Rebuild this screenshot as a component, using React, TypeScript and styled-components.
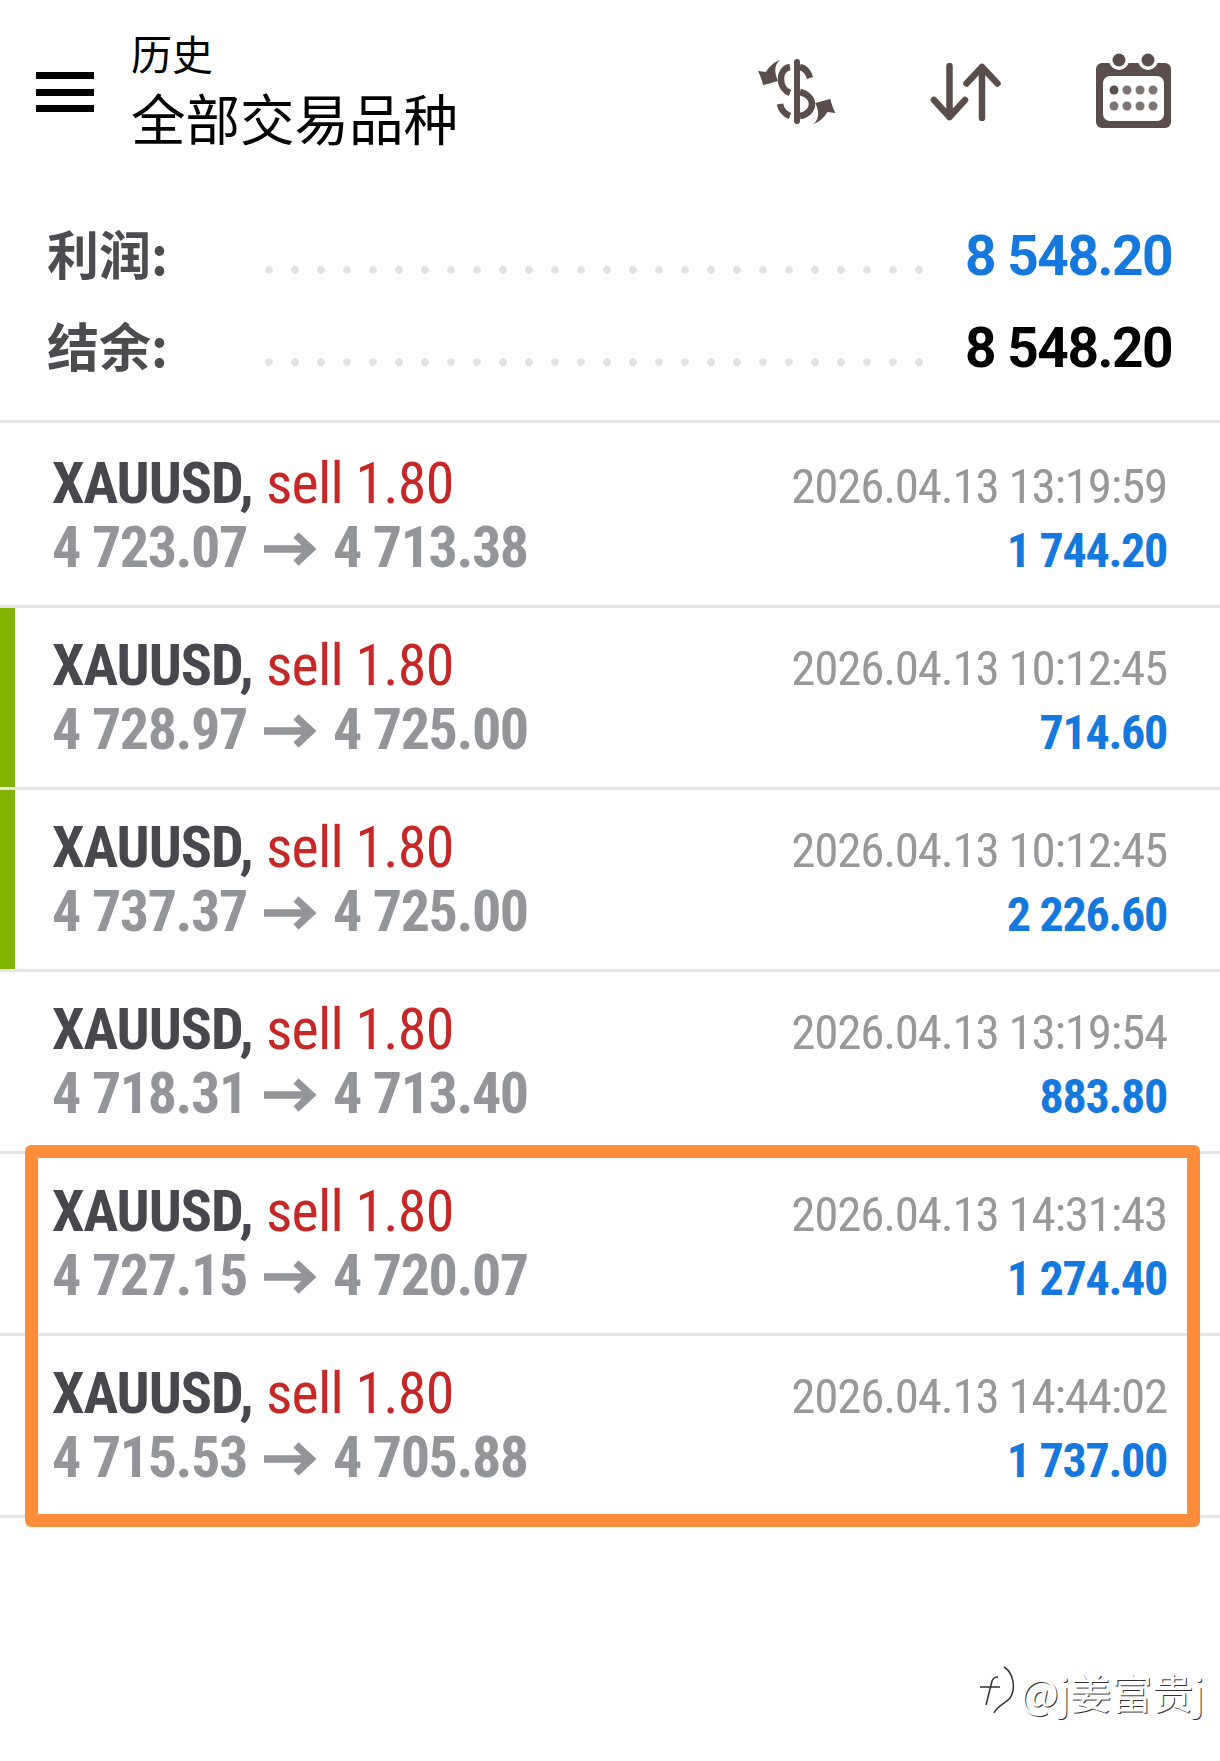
import styled, { createGlobalStyle } from "styled-components"

const rows = [
    { open: "4 723.07", close: "4 713.38", time: "2026.04.13 13:19:59", profit: "1 744.20" },
    { open: "4 728.97", close: "4 725.00", time: "2026.04.13 10:12:45", profit: "714.60", flag: true },
    { open: "4 737.37", close: "4 725.00", time: "2026.04.13 10:12:45", profit: "2 226.60", flag: true },
    { open: "4 718.31", close: "4 713.40", time: "2026.04.13 13:19:54", profit: "883.80" },
    { open: "4 727.15", close: "4 720.07", time: "2026.04.13 14:31:43", profit: "1 274.40" },
    { open: "4 715.53", close: "4 705.88", time: "2026.04.13 14:44:02", profit: "1 737.00" },
]

const swirl = "M22 1C15 7 17 15 20 22C14 24 9 25 5 26C4 21 2 16 0 12L8 13C12 6 17 3 22 1Z"

function DollarIcon() {
    return (
        <HeaderIcon viewBox="0 0 78 66" width="78" height="66" $drop={3}>
            <rect x="36" y="0" width="6" height="65" rx="3" />
            <g fill="none" stroke="#5a4e4c" strokeWidth="6.5">
                <path d="M32 8C26 9 23 14 23 20C23 27 27 32 32 34" />
                <path d="M42 8C47 9 50 12 52 19" />
                <path d="M42 33C50 35 54 40 54 45C54 51 49 56 42 57" />
                <path d="M22 45C23 51 27 55 32 57" />
            </g>
            <path d={swirl} />
            <path d={swirl} transform="rotate(180 38.7 33)" />
        </HeaderIcon>
    )
}

function SortIcon() {
    return (
        <HeaderIcon viewBox="0 0 72 58" width="72" height="58" $drop={4}>
            <g fill="none" stroke="#5a4e4c" strokeWidth="6.5" strokeLinecap="round" strokeLinejoin="round">
                <path d="M19.500 3V54M4 37L19.500 54L35 37" />
                <path d="M52 55V4M36.500 20.500L52 4L67.500 20.500" />
            </g>
        </HeaderIcon>
    )
}

function CalendarIcon() {
    const dots = [18, 31, 44, 57]
    return (
        <HeaderIcon viewBox="0 0 75 75" width="75" height="75" $drop={1}>
            <rect x="0" y="10" width="75" height="65" rx="6" />
            <rect x="7" y="23" width="61" height="45" rx="7" fill="#fff" />
            <circle cx="23" cy="7" r="10" fill="#fff" />
            <circle cx="52" cy="7" r="10" fill="#fff" />
            <circle cx="23" cy="7" r="6.500" />
            <circle cx="52" cy="7" r="6.500" />
            {dots.map(x => <circle key={x} cx={x} cy="37" r="4.500" fill={x === 18 ? "#5a4e4c" : "#7d7573"} />)}
            {dots.map(x => <circle key={x} cx={x} cy="53" r="4.500" fill="#7d7573" />)}
        </HeaderIcon>
    )
}

function PriceArrow() {
    return (
        <ArrowSvg viewBox="0 0 52 34" width="52" height="34">
            <path d="M0 17H47M32 3L47 17L32 31" fill="none" stroke="#939598" strokeWidth="7.5" />
        </ArrowSvg>
    )
}

export default function App() {
    return (
        <>
            <GlobalStyle />
            <Page>
                <Header>
                    <Burger>
                        <span />
                        <span />
                        <span />
                    </Burger>
                    <TitleBlock>
                        <Subtitle>历史</Subtitle>
                        <Title>全部交易品种</Title>
                    </TitleBlock>
                    <IconBar>
                        <DollarIcon />
                        <SortIcon />
                        <CalendarIcon />
                    </IconBar>
                </Header>
                <Summary>
                    <SummaryRow>
                        <SummaryLabel>利润:</SummaryLabel>
                        <Dots />
                        <SummaryValue $blue>8 548.20</SummaryValue>
                    </SummaryRow>
                    <SummaryRow>
                        <SummaryLabel>结余:</SummaryLabel>
                        <Dots />
                        <SummaryValue>8 548.20</SummaryValue>
                    </SummaryRow>
                </Summary>
                <List>
                    {rows.map((row, i) => (
                        <Row key={i} $flag={row.flag}>
                            <Side>
                                <Line>
                                    <Symbol>XAUUSD,</Symbol> <Sell>sell 1.80</Sell>
                                </Line>
                                <Prices>
                                    {row.open}
                                    <PriceArrow />
                                    {row.close}
                                </Prices>
                            </Side>
                            <Side $right>
                                <Time>{row.time}</Time>
                                <Profit>{row.profit}</Profit>
                            </Side>
                        </Row>
                    ))}
                    <Highlight />
                </List>
                <Watermark>
                    <svg viewBox="0 0 44 52" width="44" height="52" fill="none" stroke="#333" strokeWidth="1.500">
                        <path d="M10 40L16 16C17 13 19 12 22 12M4 22H24" />
                        <path d="M28 2C38 8 40 24 34 33C30 38 22 40 18 48" />
                    </svg>
                    @j姜富贵j
                </Watermark>
            </Page>
        </>
    )
}

const GlobalStyle = createGlobalStyle`
    html, body {
        margin: 0;
        padding: 0;
        background: #fff;
    }
`

const Page = styled.div`
    position: relative;
    width: 1220px;
    height: 1761px;
    overflow: hidden;
    background: #fff;
    font-family: "Noto Sans CJK SC", Roboto, sans-serif;
`

const Header = styled.header`
    display: flex;
    align-items: center;
    height: 180px;
    padding: 0 49px 0 36px;
    box-sizing: border-box;
`

const Burger = styled.div`
    display: flex;
    flex-direction: column;
    justify-content: space-between;
    width: 58px;
    height: 40px;
    margin-top: 4px;

    & > span {
        height: 7px;
        background: #000;
    }
`

const TitleBlock = styled.div`
    display: flex;
    flex-direction: column;
    margin: 0 0 7px 37px;
    color: #000;
`

const Subtitle = styled.div`
    font-size: 41px;
    line-height: 60px;
`

const Title = styled.div`
    font-size: 54.500px;
    line-height: 70px;
`

const IconBar = styled.div`
    display: flex;
    align-items: center;
    gap: 94px;
    margin-left: auto;
`

const HeaderIcon = styled.svg<{ $drop: number }>`
    fill: #5a4e4c;
    display: block;
    margin-top: ${p => p.$drop}px;
`

const Summary = styled.section`
    display: flex;
    flex-direction: column;
    padding: 30px 48px 0 47px;
    height: 240px;
    box-sizing: border-box;
`

const SummaryRow = styled.div`
    display: flex;
    align-items: center;
    height: 92px;
`

const SummaryLabel = styled.div`
    width: 218px;
    margin-bottom: 8px;
    font-size: 52px;
    font-weight: 700;
    color: #4b4b50;
`

const Dots = styled.div`
    width: 660px;
    height: 8px;
    margin-top: 28px;
    background-image: radial-gradient(circle at 4px 4px, #e3e3e5 3.6px, transparent 4.2px);
    background-size: 26px 8px;
`

const SummaryValue = styled.div<{ $blue?: boolean }>`
    margin-left: auto;
    font-family: Roboto, sans-serif;
    font-size: 55px;
    font-weight: 700;
    letter-spacing: -1.500px;
    color: ${p => (p.$blue ? "#1478dc" : "#000")};
`

const List = styled.div`
    position: relative;
    padding-top: 3px;
    border-top: 3px solid #e5e5e5;
`

const Row = styled.div<{ $flag?: boolean }>`
    display: flex;
    justify-content: space-between;
    height: 182px;
    box-sizing: border-box;
    padding: 25px 53px 0 52px;
    border-bottom: 3px solid #e5e5e5;
    box-shadow: ${p => (p.$flag ? "inset 15px 0 0 #82b300" : "none")};
    font-family: "Roboto Condensed", Roboto, sans-serif;
    font-stretch: condensed;
`

const Side = styled.div<{ $right?: boolean }>`
    display: flex;
    flex-direction: column;
    align-items: ${p => (p.$right ? "flex-end" : "flex-start")};
    margin-top: ${p => (p.$right ? 4 : 0)}px;
`

const Line = styled.div`
    font-size: 58px;
    line-height: 64px;
    white-space: pre;
`

const Symbol = styled.span`
    font-weight: 700;
    letter-spacing: -1px;
    color: #47474d;
`

const Sell = styled.span`
    letter-spacing: -0.800px;
    color: #c62828;
`

const Prices = styled.div`
    display: flex;
    align-items: center;
    font-size: 58px;
    line-height: 64px;
    font-weight: 700;
    letter-spacing: -1.400px;
    white-space: pre;
    color: #939598;
`

const ArrowSvg = styled.svg`
    display: block;
    margin: 4px 17px 0 17px;
`

const Time = styled.div`
    font-size: 49px;
    line-height: 64px;
    letter-spacing: -1.200px;
    color: #98989b;
`

const Profit = styled.div`
    font-size: 48px;
    line-height: 64px;
    font-weight: 700;
    letter-spacing: -1.300px;
    color: #1478dc;
`

const Highlight = styled.div`
    position: absolute;
    left: 25px;
    top: 722px;
    width: 1175px;
    height: 382px;
    box-sizing: border-box;
    border: 13px solid #ff8c3a;
    border-radius: 6px;
`

const Watermark = styled.div`
    position: absolute;
    left: 976px;
    top: 1661px;
    display: flex;
    align-items: center;
    font-size: 41px;
    color: #fff;
    text-shadow: 1px 1px 0 #333;
`
